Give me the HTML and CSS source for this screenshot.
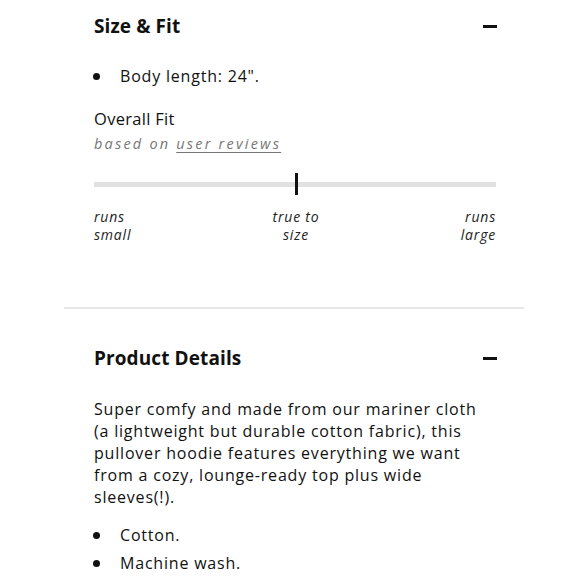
FILE: index.html
```html
<!DOCTYPE html>
<html>
<head>
<meta charset="utf-8">
<link rel="stylesheet" href="styles.css">
</head>
<body>
<div class="page">
  <section class="section first-section">
    <div class="section-head">
      <h2 class="title">Size &amp; Fit</h2>
      <span class="minus"></span>
    </div>
    <ul class="bullets first">
      <li>Body length: 24".</li>
    </ul>
    <div class="fit">
      <div class="fit-title">Overall Fit</div>
      <div class="fit-sub">based on <span class="link">user reviews</span></div>
      <div class="track"><span class="marker"></span></div>
      <div class="scale">
        <span class="lab left">runs<br>small</span>
        <span class="lab mid">true to<br>size</span>
        <span class="lab right">runs<br>large</span>
      </div>
    </div>
  </section>
  <hr class="divider">
  <section class="section second">
    <div class="section-head">
      <h2 class="title">Product Details</h2>
      <span class="minus"></span>
    </div>
    <p class="desc">Super comfy and made from our mariner cloth (a lightweight but durable cotton fabric), this pullover hoodie features everything we want from a cozy, lounge-ready top plus wide sleeves(!).</p>
    <ul class="bullets">
      <li>Cotton.</li>
      <li>Machine wash.</li>
    </ul>
  </section>
</div>
</body>
</html>
```

FILE: styles.css
```css
html, body {
  margin: 0;
  padding: 0;
  background: #fff;
}
body {
  font-family: "Open Sans", "Lato", sans-serif;
  color: #111;
}
.page {
  width: 580px;
  height: 580px;
  overflow: hidden;
}
.section {
  padding: 0 84px 0 94px;
}
.first-section {
  padding-top: 1px;
}
.section-head {
  display: flex;
  align-items: center;
  justify-content: space-between;
  height: 50px;
}
.title {
  margin: 0;
  font-size: 19px;
  font-weight: 700;
  letter-spacing: 0.1px;
}
.minus {
  width: 14px;
  height: 3px;
  background: #111;
  margin-right: -1px;
}
.bullets {
  list-style: none;
  margin: 0;
  padding: 0;
}
.bullets li {
  position: relative;
  padding-left: 26px;
  font-size: 16px;
  line-height: 28px;
  letter-spacing: 0.8px;
}
.bullets li::before {
  content: "";
  position: absolute;
  left: -1px;
  top: 11px;
  width: 7px;
  height: 7px;
  border-radius: 50%;
  background: #111;
}
.first {
  margin-top: 11px;
}
.fit {
  margin-top: 15px;
}
.fit-title {
  font-size: 16.5px;
  line-height: 27px;
  letter-spacing: 0.3px;
}
.fit-sub {
  font-size: 14.5px;
  font-style: italic;
  color: #777;
  letter-spacing: 2.2px;
  line-height: 24px;
}
.link {
  text-decoration: underline;
  text-underline-offset: 3px;
}
.track {
  position: relative;
  margin-top: 26px;
  height: 5px;
  background: #e1e1e1;
}
.marker {
  position: absolute;
  left: 201px;
  top: -9px;
  width: 3px;
  height: 22px;
  background: #111;
}
.scale {
  display: flex;
  justify-content: space-between;
  margin-top: 21px;
}
.lab {
  font-size: 14px;
  font-style: italic;
  line-height: 18px;
  letter-spacing: 0.8px;
  color: #222;
}
.mid {
  text-align: center;
}
.right {
  text-align: right;
}
.divider {
  margin: 63px 56px 0 64px;
  border: 0;
  border-top: 2px solid #e8e8e8;
  height: 0;
}
.second {
  padding-top: 24px;
}
.desc {
  margin: 15px 0 13px;
  font-size: 16px;
  line-height: 22px;
  letter-spacing: 0.8px;
}
```
